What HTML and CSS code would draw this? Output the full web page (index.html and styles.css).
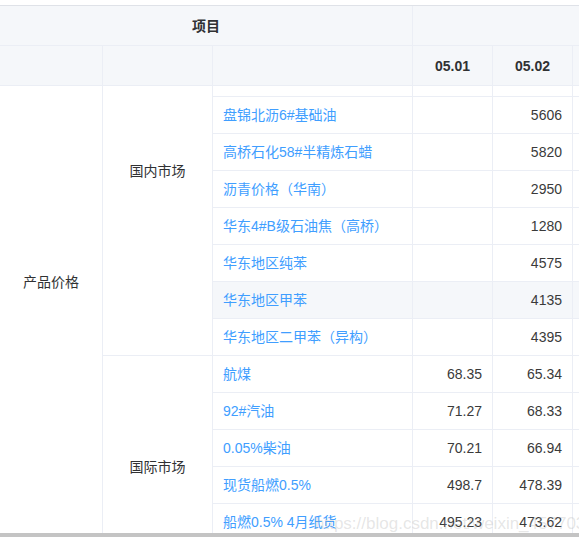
FILE: index.html
```html
<!DOCTYPE html>
<html lang="zh-CN">
<head>
<meta charset="utf-8">
<title>产品价格</title>
<link rel="stylesheet" href="styles.css">
</head>
<body>
<div class="page">
  <div class="table-wrap">
    <div class="head">
      <table class="grid">
        <colgroup>
          <col class="c1"><col class="c2"><col class="c3"><col class="cd"><col class="cd"><col class="cd">
        </colgroup>
        <thead>
          <tr class="hrow">
            <th colspan="3" class="title">项目</th>
            <th colspan="3"></th>
          </tr>
          <tr class="hrow">
            <th></th><th></th><th></th>
            <th>05.01</th><th>05.02</th><th></th>
          </tr>
        </thead>
      </table>
    </div>
    <div class="body">
      <table class="grid scrolled">
        <colgroup>
          <col class="c1"><col class="c2"><col class="c3"><col class="cd"><col class="cd"><col class="cd">
        </colgroup>
        <tbody>
          <tr>
            <td rowspan="16" class="group first">产品价格</td>
            <td rowspan="10" class="group">国内市场</td>
            <td></td><td></td><td></td><td></td>
          </tr>
          <tr><td></td><td></td><td></td><td></td></tr>
          <tr><td></td><td></td><td></td><td></td></tr>
          <tr><td><a class="link">盘锦北沥6#基础油</a></td><td></td><td class="num">5606</td><td></td></tr>
          <tr><td><a class="link">高桥石化58#半精炼石蜡</a></td><td></td><td class="num">5820</td><td></td></tr>
          <tr><td><a class="link">沥青价格（华南）</a></td><td></td><td class="num">2950</td><td></td></tr>
          <tr><td><a class="link">华东4#B级石油焦（高桥）</a></td><td></td><td class="num">1280</td><td></td></tr>
          <tr><td><a class="link">华东地区纯苯</a></td><td></td><td class="num">4575</td><td></td></tr>
          <tr class="hover"><td><a class="link">华东地区甲苯</a></td><td></td><td class="num">4135</td><td></td></tr>
          <tr><td><a class="link">华东地区二甲苯（异构）</a></td><td></td><td class="num">4395</td><td></td></tr>
          <tr>
            <td rowspan="6" class="group">国际市场</td>
            <td><a class="link">航煤</a></td><td class="num">68.35</td><td class="num">65.34</td><td></td>
          </tr>
          <tr><td><a class="link">92#汽油</a></td><td class="num">71.27</td><td class="num">68.33</td><td></td></tr>
          <tr><td><a class="link">0.05%柴油</a></td><td class="num">70.21</td><td class="num">66.94</td><td></td></tr>
          <tr><td><a class="link">现货船燃0.5%</a></td><td class="num">498.7</td><td class="num">478.39</td><td></td></tr>
          <tr><td><a class="link">船燃0.5% 4月纸货</a></td><td class="num">495.23</td><td class="num">473.62</td><td></td></tr>
          <tr><td></td><td></td><td></td><td></td></tr>
        </tbody>
      </table>
    </div>
    <div class="hscroll"></div>
    <div class="watermark">https://blog.csdn.net/weixin_45770322</div>
  </div>
</div>
</body>
</html>
```
FILE: styles.css
```css
* { box-sizing: border-box; }
html, body { margin: 0; padding: 0; background: #fff; }
body {
  font-family: "Liberation Sans", "Noto Sans CJK SC", sans-serif;
  font-size: 14px;
  color: #333;
}
.page { padding-top: 5px; width: 579px; }
.table-wrap {
  position: relative;
  width: 579px;
  overflow: hidden;
  border-top: 1px solid #dfe2e8;
}
.grid {
  table-layout: fixed;
  border-collapse: separate;
  border-spacing: 0;
  width: 653px;
}
.c1 { width: 103px; }
.c2 { width: 110px; }
.c3 { width: 200px; }
.cd { width: 80px; }
.grid th, .grid td {
  border-right: 1px solid #ebeef5;
  border-bottom: 1px solid #ebeef5;
  padding: 0 10px;
  line-height: 20px;
  white-space: nowrap;
  overflow: hidden;
}
.grid th {
  background: #f5f7fa;
  font-weight: bold;
  color: #303133;
  text-align: center;
}
.hrow { height: 40px; }
.title { padding-right: 19px; }
.body {
  height: 447px;
  overflow: hidden;
}
.scrolled { margin-top: -100px; }
.scrolled tr { height: 37px; }
.group { text-align: center; color: #303133; }
.first { padding-right: 18px; }
.num { text-align: right; color: #3a3a3a; }
.link { color: #409eff; text-decoration: none; }
.hover td { background: #f5f7fa; }
.hscroll { height: 4px; background: #c4c4c4; }
.watermark {
  position: absolute;
  left: 315px;
  top: 508px;
  font-size: 17px;
  color: rgba(170, 170, 170, 0.3);
  white-space: nowrap;
  pointer-events: none;
}
```
